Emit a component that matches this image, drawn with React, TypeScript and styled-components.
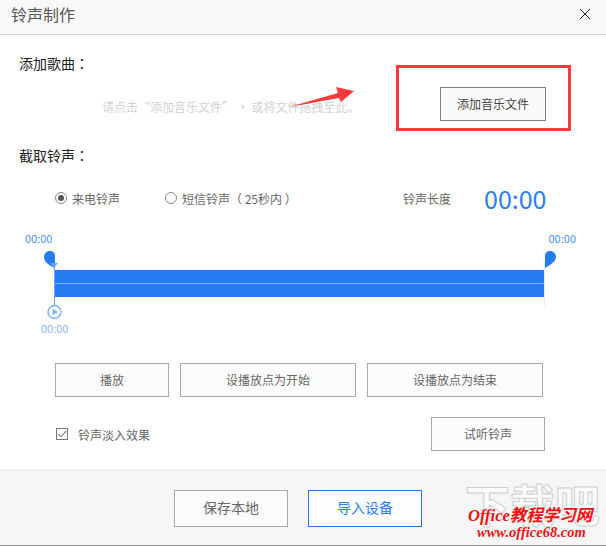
import { createGlobalStyle, styled } from 'styled-components';

const GlobalStyle = createGlobalStyle`
  html, body {
    margin: 0;
    padding: 0;
    background: #fff;
  }
`;

const BLUE = '#247cf0';

/**
 * 铃声制作 dialog
 */
export default function App() {
  return (
    <Dialog>
      <GlobalStyle />
      <Header>
        <Title>铃声制作</Title>
        <svg width="12" height="12" viewBox="0 0 12 12">
          <path d="M1 1 L11 11 M11 1 L1 11" stroke="#222" strokeWidth="1" fill="none" />
        </svg>
      </Header>

      <Body>
        <SectionTitle>添加歌曲<Punct>：</Punct></SectionTitle>
        <AddRow>
          <Hint>请点击“添加音乐文件” <Punct>，</Punct> 或将文件拖拽至此。</Hint>
          <AddButton>添加音乐文件</AddButton>
          <Annotation />
          <ArrowMark width="70" height="24" viewBox="0 0 70 24">
            <path d="M1 21 L50 7 L48 1 L66 5 L53 16 L51 12 Z" fill="#f83a3a" />
          </ArrowMark>
        </AddRow>

        <ClipTitle>截取铃声<Punct>：</Punct></ClipTitle>
        <OptionRow>
          <RadioOption $width={110}>
            <Radio $checked />
            来电铃声
          </RadioOption>
          <RadioOption $width={238}>
            <Radio />
            短信铃声（ 25秒内 ）
          </RadioOption>
          <LengthLabel>铃声长度</LengthLabel>
          <LengthValue>00:00</LengthValue>
        </OptionRow>

        <TimeRow>
          <span>00:00</span>
          <span>00:00</span>
        </TimeRow>
        <Waveform width="606" height="75" viewBox="0 0 606 75">
          <rect x="55" y="24" width="490" height="27" fill={BLUE} />
          <rect x="55" y="37" width="490" height="1" fill="#82b3fb" />
          <rect x="544" y="15" width="1" height="45" fill="#e4edfb" />
          <rect x="54" y="17" width="1" height="42" fill="#6aa5ff" />
          <path d="M50 5 C53.4 5 55 7.6 55 10 L55 22 C50 20 44 16.500 44 11 C44 7.500 46.600 5 50 5 Z" fill={BLUE} />
          <path d="M50 17 L58 17 L54 22 Z" fill="#6aa5ff" />
          <path d="M550 5 C546.600 5 545 7.600 545 10 L545 22 C550 19 556 15.500 556 11 C556 7.500 553.400 5 550 5 Z" fill={BLUE} />
          <circle cx="54.500" cy="66" r="6.500" fill="#fff" stroke="#7cb0ff" strokeWidth="1.400" />
          <path d="M52.500 62.800 L58 66 L52.500 69.200 Z" fill="#7cb0ff" />
        </Waveform>
        <PlayTime>00:00</PlayTime>

        <ButtonRow>
          <ActionButton $width={114}>播放</ActionButton>
          <ActionButton $width={176}>设播放点为开始</ActionButton>
          <ActionButton $width={176}>设播放点为结束</ActionButton>
        </ButtonRow>

        <FadeRow>
          <CheckLabel>
            <CheckBox>
              <svg width="9" height="8" viewBox="0 0 9 8">
                <path d="M0.500 4 L3 6.800 L8.500 0.800" stroke="#444" strokeWidth="1" fill="none" />
              </svg>
            </CheckBox>
            铃声淡入效果
          </CheckLabel>
          <ActionButton $width={114}>试听铃声</ActionButton>
        </FadeRow>
      </Body>

      <Footer>
        <FooterButton>保存本地</FooterButton>
        <FooterButton $primary>导入设备</FooterButton>
        <Watermark>
          <GhostMark>下载吧</GhostMark>
          <BrandLine>Office教程学习网</BrandLine>
          <UrlLine>www.office68.com</UrlLine>
        </Watermark>
      </Footer>
    </Dialog>
  );
}

const Dialog = styled.div`
  display: flex;
  flex-direction: column;
  position: relative;
  overflow: hidden;

  width: 606px;
  height: 546px;
  background-color: #fff;

  font-family: 'Noto Sans CJK SC', 'Noto Sans', sans-serif;
  color: #666;
`;

const Header = styled.div`
  display: flex;
  align-items: center;
  justify-content: space-between;
  box-sizing: border-box;

  height: 35px;
  padding: 0 15px 6px 11px;
  border-bottom: 1px solid #d6d6d6;
  background-color: #f8f8f8;
`;

const Title = styled.div`
  font-size: 16px;
  line-height: 28px;
  color: #555;
`;

const Body = styled.div`
  display: flex;
  flex-direction: column;
  box-sizing: border-box;

  height: 435px;
  padding-top: 18px;
`;

const SectionTitle = styled.div`
  padding-left: 19px;

  font-size: 14px;
  line-height: 20px;
  color: #222;
`;

const ClipTitle = styled(SectionTitle)`
  margin-top: 24px;
`;

/* 콜론·쉼표가 글자 칸 가운데 오도록 TC 글꼴 사용 */
const Punct = styled.span`
  font-family: 'Noto Sans CJK TC', sans-serif;
`;

const AddRow = styled.div`
  display: flex;
  align-items: center;
  justify-content: space-between;
  position: relative;

  height: 34px;
  margin-top: 14px;
  padding: 0 60px 0 102px;
`;

const Hint = styled.div`
  padding-top: 6px;

  font-size: 12px;
  line-height: 18px;
  white-space: nowrap;
  color: #d2d2d2;
`;

const AddButton = styled.div`
  display: flex;
  align-items: center;
  justify-content: center;
  box-sizing: border-box;

  width: 106px;
  height: 34px;
  padding-bottom: 2px;
  border: 1px solid #808080;
  background-color: #fafafa;

  font-size: 12px;
  color: #444;
`;

const Annotation = styled.div`
  position: absolute;
  left: 396px;
  top: -22px;
  box-sizing: border-box;

  width: 175px;
  height: 66px;
  border: 3px solid #f83a3a;
`;

const ArrowMark = styled.svg`
  position: absolute;
  left: 288px;
  top: -1px;
`;

const OptionRow = styled.div`
  display: flex;
  align-items: center;

  height: 24px;
  margin-top: 21px;
  padding-left: 55px;
`;

const RadioOption = styled.div<{ $width: number }>`
  display: flex;
  align-items: center;
  gap: 5px;

  width: ${(props) => props.$width}px;

  font-size: 12px;
  white-space: nowrap;
  color: #666;
`;

const Radio = styled.span<{ $checked?: boolean }>`
  display: flex;
  align-items: center;
  justify-content: center;
  box-sizing: border-box;

  width: 12px;
  height: 12px;
  border: 1px solid #888;
  border-radius: 50%;

  &::after {
    content: '';
    display: ${(props) => (props.$checked ? 'block' : 'none')};
    width: 6px;
    height: 6px;
    border-radius: 50%;
    background-color: #555;
  }
`;

const LengthLabel = styled.div`
  width: 81px;

  font-size: 12px;
  color: #666;
`;

const LengthValue = styled.div`
  font-size: 25px;
  line-height: 24px;
  color: #2a80f0;
`;

const TimeRow = styled.div`
  display: flex;
  justify-content: space-between;

  height: 16px;
  margin-top: 20px;
  padding: 0 30px 0 25px;

  font-size: 11px;
  line-height: 16px;
  color: #4a90f5;
`;

const Waveform = styled.svg`
  display: block;
  flex: none;
`;

const PlayTime = styled.div`
  height: 14px;
  padding-left: 41px;

  font-size: 11px;
  line-height: 14px;
  color: #8ab8ff;
`;

const ButtonRow = styled.div`
  display: flex;
  gap: 11px;

  margin-top: 28px;
  padding-left: 55px;
`;

const ActionButton = styled.div<{ $width: number }>`
  display: flex;
  align-items: center;
  justify-content: center;
  box-sizing: border-box;

  width: ${(props) => props.$width}px;
  height: 34px;
  padding-bottom: 2px;
  border: 1px solid #a8a8a8;
  background-color: #fcfcfc;

  font-size: 12px;
  color: #666;
`;

const FadeRow = styled.div`
  display: flex;
  align-items: center;
  justify-content: space-between;

  margin-top: 20px;
  padding: 0 61px 0 56px;
`;

const CheckLabel = styled.div`
  display: flex;
  align-items: center;
  gap: 10px;

  font-size: 12px;
  color: #666;
`;

const CheckBox = styled.span`
  display: flex;
  align-items: center;
  justify-content: center;
  box-sizing: border-box;

  width: 12px;
  height: 12px;
  border: 1px solid #777;
  background-color: #fff;
`;

const Footer = styled.div`
  display: flex;
  align-items: center;
  justify-content: center;
  gap: 20px;
  position: relative;
  box-sizing: border-box;

  height: 76px;
  padding-right: 10px;
  border-top: 1px solid #e8e8e8;
  border-bottom: 1px solid #8c8c8c;
  background-color: #f6f6f6;
`;

const FooterButton = styled.div<{ $primary?: boolean }>`
  display: flex;
  align-items: center;
  justify-content: center;
  box-sizing: border-box;

  width: 114px;
  height: 37px;
  padding-bottom: 2px;
  border: 1px solid ${(props) => (props.$primary ? '#2478e8' : '#a8a8a8')};
  background-color: ${(props) => (props.$primary ? '#fbfdff' : '#fcfcfc')};

  font-size: 14px;
  color: ${(props) => (props.$primary ? '#2a80f0' : '#666')};
`;

const Watermark = styled.div`
  position: absolute;
  left: 466px;
  top: 11px;

  width: 136px;
  height: 62px;
`;

const GhostMark = styled.div`
  position: absolute;
  left: -1px;
  top: -3px;

  font-size: 45px;
  font-weight: 700;
  line-height: 50px;
  white-space: nowrap;
  color: #fbfbfb;
  -webkit-text-stroke: 1px #cfcfcf;
`;

const BrandLine = styled.div`
  position: absolute;
  left: 2px;
  top: 25px;

  font-family: 'Liberation Serif', 'Noto Sans CJK SC', serif;
  font-size: 16.500px;
  font-style: italic;
  font-weight: 700;
  line-height: 18px;
  white-space: nowrap;
  color: #f01010;
  text-shadow: 0 0 2px #fff;
`;

const UrlLine = styled.div`
  position: absolute;
  left: 11px;
  top: 42px;

  font-family: 'Liberation Serif', serif;
  font-size: 14.500px;
  font-style: italic;
  font-weight: 700;
  line-height: 16px;
  white-space: nowrap;
  color: #f01010;
  text-shadow: 0 0 2px #fff;
`;
